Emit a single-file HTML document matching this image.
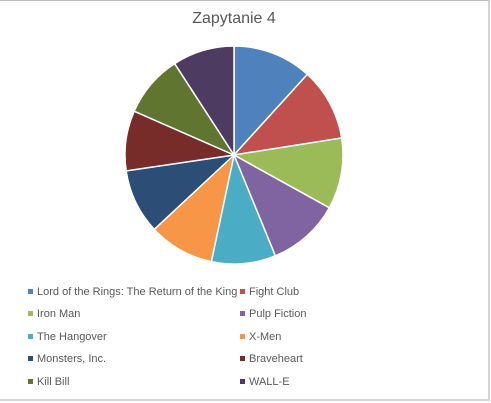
<!DOCTYPE html>
<html><head><meta charset="utf-8"><style>
html,body{margin:0;padding:0;background:#fff;}
body{width:491px;height:403px;position:relative;overflow:hidden;font-family:"Liberation Sans",sans-serif;}
#box{position:absolute;left:0;top:0;width:488px;height:398px;border-top:1px solid #bdbdbd;border-right:2px solid #d4d4d4;border-bottom:2px solid #d4d4d4;background:#fff;}
.t{position:absolute;left:0;width:468px;top:10px;text-align:center;font-size:16px;color:#595959;}
.l{position:absolute;font-size:11px;color:#595959;white-space:nowrap;}
.l i{display:inline-block;width:5px;height:5px;margin-right:4px;vertical-align:1px;}
</style></head><body>
<div id="box"></div>
<div class="t">Zapytanie 4</div>
<svg id="pie" width="491" height="403" style="position:absolute;left:0;top:0"></svg>
<div class="l" style="left:28px;top:286px"><i style="background:#4F81BD"></i>Lord of the Rings: The Return of the King</div>
<div class="l" style="left:240px;top:286px"><i style="background:#C0504D"></i>Fight Club</div>
<div class="l" style="left:28px;top:308px"><i style="background:#9BBB59"></i>Iron Man</div>
<div class="l" style="left:240px;top:308px"><i style="background:#8064A2"></i>Pulp Fiction</div>
<div class="l" style="left:28px;top:331px"><i style="background:#4BACC6"></i>The Hangover</div>
<div class="l" style="left:240px;top:331px"><i style="background:#F79646"></i>X-Men</div>
<div class="l" style="left:28px;top:353px"><i style="background:#2C4D75"></i>Monsters, Inc.</div>
<div class="l" style="left:240px;top:353px"><i style="background:#772C2A"></i>Braveheart</div>
<div class="l" style="left:28px;top:376px"><i style="background:#5F7530"></i>Kill Bill</div>
<div class="l" style="left:240px;top:376px"><i style="background:#4D3B62"></i>WALL-E</div>
<script>
var b=[0,42.3,81,119,157.7,192,227,261.6,293.7,327,360];
var c=["#4F81BD","#C0504D","#9BBB59","#8064A2","#4BACC6","#F79646","#2C4D75","#772C2A","#5F7530","#4D3B62"];
var cx=234,cy=155,r=109,s="";
function p(a){a=a*Math.PI/180;return (cx+r*Math.sin(a)).toFixed(2)+","+(cy-r*Math.cos(a)).toFixed(2);}
for(var i=0;i<10;i++){s+='<path d="M'+cx+','+cy+' L'+p(b[i])+' A'+r+','+r+' 0 0 1 '+p(b[i+1])+' Z" fill="'+c[i]+'" stroke="#fff" stroke-width="1.5" stroke-linejoin="round"/>';}
document.getElementById("pie").innerHTML=s;
</script>
</body></html>
